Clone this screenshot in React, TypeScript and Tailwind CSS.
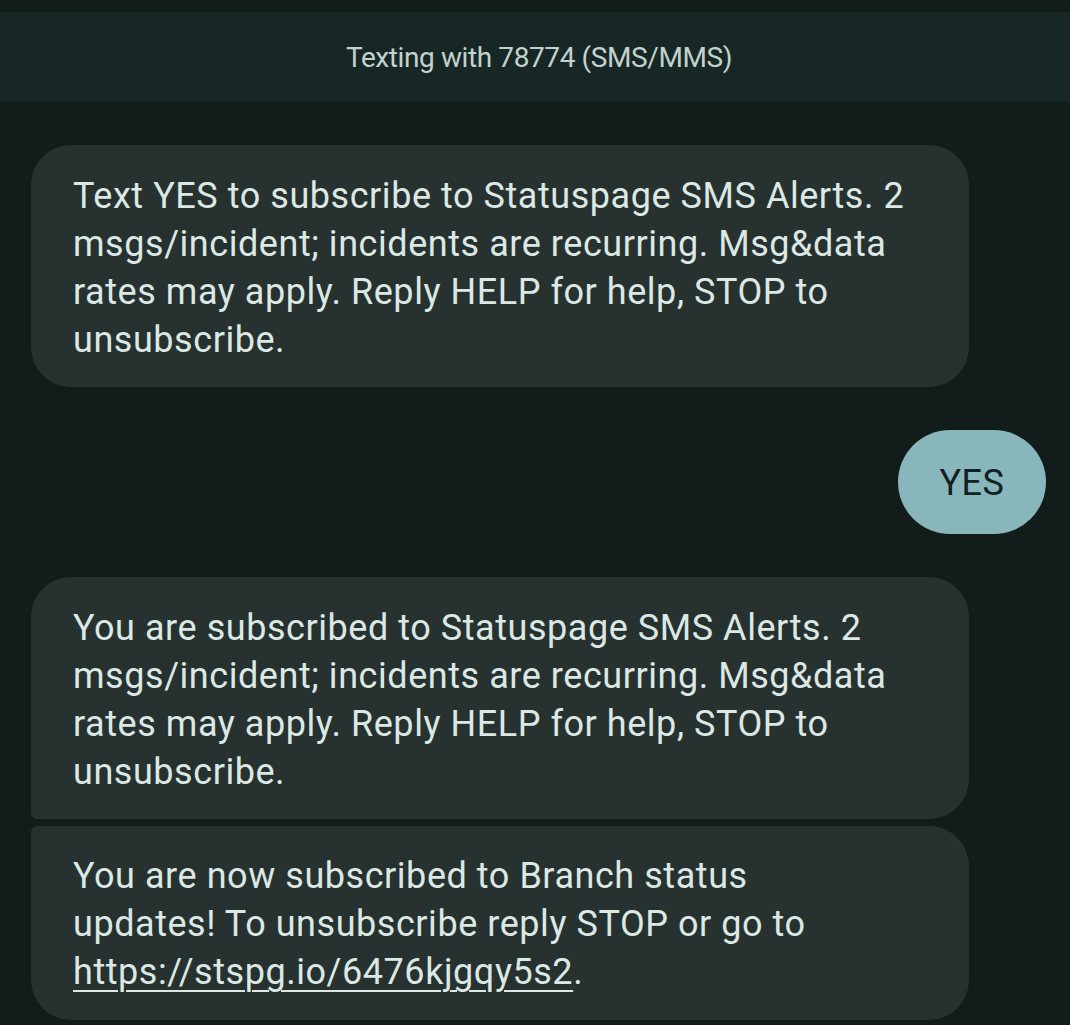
import React from 'react'

const FONT = { fontFamily: 'Roboto, "Noto Sans", sans-serif' }

function Lines({ lines }: { lines: React.ReactNode[] }) {
  return (
    <>
      {lines.map((l, i) => (
        <span key={i} className="block whitespace-nowrap">
          {l}
        </span>
      ))}
    </>
  )
}

export default function App() {
  return (
    <div className="h-[1025px] w-[1070px] overflow-hidden bg-[#121c1b] text-[#dce8e4]" style={FONT}>
      {/* header */}
      <div className="mt-3 flex h-[90px] items-center justify-center bg-[#172726] pt-[2px] pl-[8px]">
        <span className="text-[28px] tracking-[-0.4px] text-[#c3d2cd]">Texting with 78774 (SMS/MMS)</span>
      </div>

      <div className="flex flex-col px-[31px] pt-[43px] text-[36px] leading-[48px] tracking-[0.55px]">
        <div className="w-[938px] rounded-[40px] bg-[#273230] px-[42px] pt-[27px] pb-[23px]">
          <Lines
            lines={[
              'Text YES to subscribe to Statuspage SMS Alerts. 2',
              'msgs/incident; incidents are recurring. Msg&data',
              'rates may apply. Reply HELP for help, STOP to',
              'unsubscribe.',
            ]}
          />
        </div>

        <div className="mt-[43px] -mr-[7px] flex justify-end">
          <div className="flex h-[104px] w-[148px] items-center justify-center rounded-full bg-[#89b6bb] pt-[2px] text-[#0f2122]">
            YES
          </div>
        </div>

        <div className="mt-[43px] w-[938px] rounded-[40px] rounded-bl-[6px] bg-[#273230] px-[42px] pt-[27px] pb-[23px]">
          <Lines
            lines={[
              'You are subscribed to Statuspage SMS Alerts. 2',
              'msgs/incident; incidents are recurring. Msg&data',
              'rates may apply. Reply HELP for help, STOP to',
              'unsubscribe.',
            ]}
          />
        </div>

        <div className="mt-[7px] w-[938px] rounded-[40px] rounded-tl-[6px] bg-[#273230] px-[42px] pt-[26px] pb-[24px]">
          <Lines
            lines={[
              'You are now subscribed to Branch status',
              'updates! To unsubscribe reply STOP or go to',
              <>
                <span className="underline decoration-[2px] underline-offset-[6px]">https://stspg.io/6476kjgqy5s2</span>.
              </>,
            ]}
          />
        </div>
      </div>
    </div>
  )
}
